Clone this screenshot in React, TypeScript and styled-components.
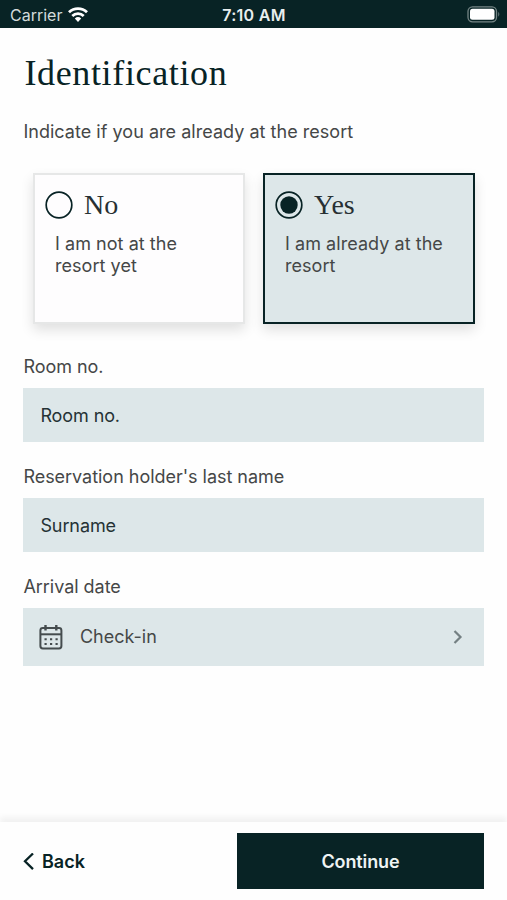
import React, { useState } from "react";
import styled, { createGlobalStyle } from "styled-components";

const ink = "#082325";
const mist = "#dde7e9";
const sans = `Inter, "Liberation Sans", sans-serif`;
const serif = `"Liberation Serif", serif`;

const GlobalStyle = createGlobalStyle`
  *, *::before, *::after { box-sizing: border-box; }
  body { margin: 0; background: #fefefe; }
  button, input { font: inherit; color: inherit; margin: 0; border-radius: 0; }
`;

const Screen = styled.div`
  display: flex;
  flex-direction: column;
  width: 507px;
  height: 900px;
  overflow: hidden;
  background: #fefefe;
  color: #454747;
  font: 400 18px/22px ${sans};
`;

const StatusBar = styled.header`
  display: grid;
  grid-template-columns: 1fr auto 1fr;
  align-items: center;
  flex: none;
  height: 28px;
  padding: 2px 6px 0 10px;
  background: ${ink};
  color: #e8eeee;
  font-size: 16px;
`;

const Carrier = styled.div`
  display: flex;
  align-items: center;
  gap: 6px;
  color: #d3dbdb;
`;

const Clock = styled.time`
  margin-right: 3px;
  font-weight: 600;
  letter-spacing: 0.3px;
`;

const BatteryIcon = styled.svg`
  justify-self: end;
`;

const Content = styled.main`
  flex: 1;
  padding: 24px 23px 0 23.4px;
`;

const Title = styled.h1`
  margin: 0 0 27px 1px;
  color: ${ink};
  font: 400 36px/42px ${serif};
  letter-spacing: 0.65px;
  font-feature-settings: "liga" 1;
`;

const Prompt = styled.p`
  margin: 0;
  letter-spacing: 0.03px;
`;

const Choices = styled.div`
  display: grid;
  grid-template-columns: 1fr 1fr;
  gap: 18px;
  margin: 30px 9px 32px 9.6px;
`;

const Choice = styled.button<{ $selected: boolean }>`
  display: flex;
  flex-direction: column;
  height: 151px;
  padding: 14px 10px;
  border: ${(p) => (p.$selected ? `2px solid ${ink}` : "2px solid #e6e7e7")};
  background: ${(p) => (p.$selected ? mist : "#fefdfe")};
  box-shadow: 0 6px 12px rgba(0, 0, 0, 0.12);
  text-align: left;
`;

const ChoiceHead = styled.span`
  display: flex;
  align-items: center;
  gap: 11px;
  height: 32px;
`;

const ChoiceName = styled.span`
  color: #273033;
  font: 400 28px/32px ${serif};
`;

const ChoiceNote = styled.span`
  margin: 12px 12px 0 10px;
  letter-spacing: 0.05px;
`;

const Field = styled.label`
  display: block;
  margin-bottom: 24px;
`;

const FieldLabel = styled.span`
  display: block;
  margin-bottom: 10px;
  letter-spacing: -0.03px;
`;

const TextInput = styled.input`
  display: block;
  width: 100%;
  height: 54px;
  padding: 0 17px;
  border: 0;
  background: ${mist};
  color: #253235;
  letter-spacing: -0.1px;
  &::placeholder { color: inherit; opacity: 1; }
`;

const DateButton = styled.button`
  display: flex;
  align-items: center;
  width: 100%;
  height: 58px;
  padding: 0 20px 0 16px;
  border: 0;
  background: ${mist};
`;

const DateText = styled.span`
  flex: 1;
  margin-left: 16.5px;
  text-align: left;
`;

const Footer = styled.footer`
  display: flex;
  align-items: center;
  justify-content: space-between;
  flex: none;
  height: 78px;
  padding: 0 23px;
  background: #fefefe;
  box-shadow: 0 -5px 6px rgba(0, 0, 0, 0.05);
  font-weight: 600;
`;

const BackButton = styled.button`
  display: flex;
  align-items: center;
  gap: 7px;
  padding: 2px 0 0;
  border: 0;
  background: none;
  color: ${ink};
`;

const ContinueButton = styled.button`
  width: 247px;
  height: 56px;
  padding: 2px 0 0;
  border: 0;
  background: ${ink};
  color: #eff4f4;
  letter-spacing: -0.1px;
`;

const Radio = ({ checked }: { checked: boolean }) => (
  <svg width="28" height="28" viewBox="0 0 28 28" fill="none">
    <circle cx="14" cy="14" r="12.8" stroke={ink} strokeWidth="1.7" />
    {checked && <circle cx="14" cy="14" r="8.7" fill={ink} />}
  </svg>
);

const WifiIcon = () => (
  <svg width="20" height="16" viewBox="0 0 20 16" fill="none" stroke="#fff" strokeWidth="2.8">
    <path d="M1 5.3a13 13 0 0 1 18 0M4.3 8.9a8.2 8.2 0 0 1 11.4 0" />
    <path d="M10 15l-3.2-3.4a4.7 4.7 0 0 1 6.4 0z" fill="#fff" stroke="none" />
  </svg>
);

const CalendarIcon = () => (
  <svg width="24" height="26" viewBox="0 0 24 26" fill="none" stroke="#454c4e" strokeWidth="2">
    <rect x="1.4" y="4" width="21" height="20.5" rx="2.4" />
    <path d="M1.4 10.3h21" />
    <path d="M6.5 1v5.4M17.3 1v5.4" strokeWidth="2.4" />
    <path d="M5.5 15.2h2.2M11 15.2h2.2M16.5 15.2h2.2M5.5 19.9h2.2M11 19.9h2.2M16.5 19.9h2.2" />
  </svg>
);

const choices = [
  { name: "No", note: "I am not at the resort yet" },
  { name: "Yes", note: "I am already at the resort" },
];

export default function App() {
  const [selected, setSelected] = useState("Yes");
  return (
    <>
      <GlobalStyle />
      <Screen>
        <StatusBar>
          <Carrier>
            Carrier
            <WifiIcon />
          </Carrier>
          <Clock>7:10 AM</Clock>
          <BatteryIcon width="34" height="18" viewBox="0 0 34 18">
            <rect x="1" y="0.8" width="28.5" height="15" rx="4.5" fill="none" stroke="#758585" strokeWidth="1.3" />
            <rect x="3" y="2.8" width="24.5" height="11" rx="2.5" fill="#fff" />
            <path d="M31.3 5.8q2 2.5 0 5z" fill="#758585" />
          </BatteryIcon>
        </StatusBar>
        <Content>
          <Title>Identification</Title>
          <Prompt>Indicate if you are already at the resort</Prompt>
          <Choices role="radiogroup">
            {choices.map((c) => (
              <Choice
                key={c.name}
                type="button"
                role="radio"
                aria-checked={c.name === selected}
                $selected={c.name === selected}
                onClick={() => setSelected(c.name)}
              >
                <ChoiceHead>
                  <Radio checked={c.name === selected} />
                  <ChoiceName>{c.name}</ChoiceName>
                </ChoiceHead>
                <ChoiceNote>{c.note}</ChoiceNote>
              </Choice>
            ))}
          </Choices>
          <Field>
            <FieldLabel>Room no.</FieldLabel>
            <TextInput placeholder="Room no." />
          </Field>
          <Field>
            <FieldLabel>Reservation holder's last name</FieldLabel>
            <TextInput placeholder="Surname" />
          </Field>
          <FieldLabel>Arrival date</FieldLabel>
          <DateButton type="button">
            <CalendarIcon />
            <DateText>Check-in</DateText>
            <svg width="12" height="14" viewBox="0 0 12 14" fill="none" stroke="#748083" strokeWidth="2.2">
              <path d="M2.5 1l6 6-6 6" />
            </svg>
          </DateButton>
        </Content>
        <Footer>
          <BackButton type="button">
            <svg width="12" height="18" viewBox="0 0 12 18" fill="none" stroke={ink} strokeWidth="2.3">
              <path d="M10 0.5L2 8.3l8 7.8" />
            </svg>
            Back
          </BackButton>
          <ContinueButton type="button">Continue</ContinueButton>
        </Footer>
      </Screen>
    </>
  );
}
